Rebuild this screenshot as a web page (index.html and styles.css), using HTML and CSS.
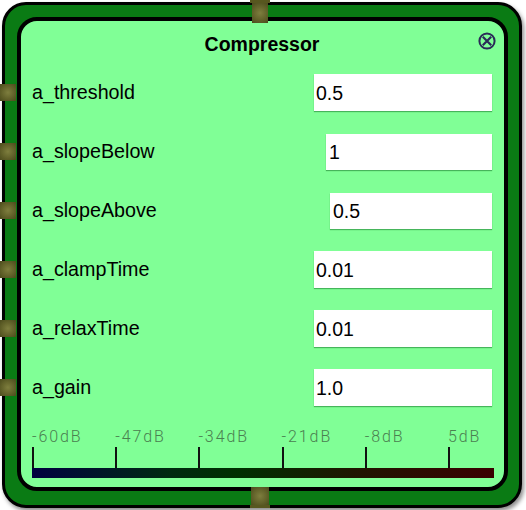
FILE: index.html
```html
<!DOCTYPE html>
<html>
<head>
<meta charset="utf-8">
<link rel="stylesheet" href="styles.css">
</head>
<body>
<div class="node">
  <div class="port port-top"></div>
  <div class="port port-bottom"></div>
  <div class="panel">
    <div class="header">
      <span class="title">Compressor</span>
      <svg class="close" width="18" height="18" viewBox="0 0 18 18">
        <circle cx="9" cy="9" r="7.6" fill="none" stroke="#2a2a58" stroke-width="2"/>
        <path d="M4.8 4.8 L13.2 13.2 M13.2 4.8 L4.8 13.2" stroke="#2a2a58" stroke-width="2.2"/>
      </svg>
    </div>
    <div class="rows">
      <div class="row"><span class="port port-left"></span><span class="label">a_threshold</span><input class="field" value="0.5"></div>
      <div class="row"><span class="port port-left"></span><span class="label">a_slopeBelow</span><input class="field field-mid" value="1"></div>
      <div class="row"><span class="port port-left"></span><span class="label">a_slopeAbove</span><input class="field field-short" value="0.5"></div>
      <div class="row"><span class="port port-left"></span><span class="label">a_clampTime</span><input class="field" value="0.01"></div>
      <div class="row"><span class="port port-left"></span><span class="label">a_relaxTime</span><input class="field" value="0.01"></div>
      <div class="row"><span class="port port-left"></span><span class="label">a_gain</span><input class="field" value="1.0"></div>
    </div>
    <div class="meter">
      <div class="ticks">
        <div class="tick"><span class="db">-60dB</span></div>
        <div class="tick"><span class="db">-47dB</span></div>
        <div class="tick"><span class="db">-34dB</span></div>
        <div class="tick"><span class="db">-21dB</span></div>
        <div class="tick"><span class="db">-8dB</span></div>
        <div class="tick"><span class="db">5dB</span></div>
      </div>
      <div class="bar"></div>
    </div>
  </div>
</div>
</body>
</html>
```
FILE: styles.css
```css
html, body {
  margin: 0;
  padding: 0;
  background: #ffffff;
}
body {
  width: 526px;
  height: 510px;
  overflow: hidden;
  font-family: "Liberation Sans", Arial, sans-serif;
}
.node {
  position: relative;
  margin: 2px 0 0 2px;
  width: 520px;
  height: 506px;
  border: 3px solid #000;
  border-radius: 24px;
  background: #0a7b14;
  box-shadow: 2px 3px 4px rgba(0,0,0,0.45);
  padding: 12px 11px 14px 12px;
  box-sizing: border-box;
}
.panel {
  height: 100%;
  box-sizing: border-box;
  border: 4px solid #000;
  border-radius: 20px;
  background: #80ff96;
  padding: 0 12px 0 11px;
}
.header {
  position: relative;
  height: 42px;
  padding-top: 11px;
  box-sizing: border-box;
  text-align: center;
}
.title {
  font-weight: bold;
  font-size: 19.5px;
  line-height: 24px;
  color: #000;
}
.close {
  position: absolute;
  right: -4px;
  top: 11px;
}
.rows {
  display: flex;
  flex-direction: column;
}
.row {
  position: relative;
  height: 59px;
  display: flex;
  align-items: center;
  justify-content: space-between;
}
.label {
  font-size: 19.7px;
  color: #000;
}
.field {
  box-sizing: border-box;
  width: 178px;
  height: 37px;
  border: none;
  outline: none;
  background: #fff;
  box-shadow: 0 1px 1px rgba(0,90,20,0.45);
  padding: 2px 0 0 2px;
  font-family: "Liberation Sans", Arial, sans-serif;
  font-size: 19.5px;
  color: #000;
}
.field-mid {
  width: 166px;
  height: 36px;
  padding-left: 3px;
}
.field-short {
  width: 162px;
  height: 36px;
  padding-left: 3px;
}
.port {
  display: block;
  background: radial-gradient(circle at 50% 50%, #7e7e3e 0%, #62622a 55%, #4b4b1c 100%);
}
.port-left {
  position: absolute;
  left: -32px;
  top: 21px;
  width: 16px;
  height: 17px;
}
.port-top {
  position: absolute;
  left: 247px;
  top: -5px;
  width: 16px;
  height: 20px;
  border-top: 3px solid #5a5a26;
}
.port-top::before {
  content: "";
  position: absolute;
  left: -2px;
  top: -3px;
  width: 20px;
  height: 3px;
  background: #57571f;
}
.port-bottom {
  position: absolute;
  left: 246px;
  top: 482px;
  width: 18px;
  height: 18px;
}
.port-bottom::after {
  content: "";
  position: absolute;
  left: -1px;
  bottom: -3px;
  width: 20px;
  height: 3px;
  background: #57571f;
}
.meter {
  margin-top: 11px;
}
.ticks {
  display: flex;
}
.tick {
  width: 83.2px;
  height: 40px;
  flex: none;
  position: relative;
  display: flex;
  flex-direction: column;
}
.tick::after {
  content: "";
  position: absolute;
  left: 0;
  top: 19px;
  width: 2px;
  height: 21px;
  background: #111;
}
.db {
  font-family: Roboto, "DejaVu Sans", sans-serif;
  font-weight: 300;
  font-size: 16px;
  letter-spacing: 1.9px;
  line-height: 18px;
  color: #4a8050;
  white-space: nowrap;
}
.bar {
  width: 462px;
  height: 10px;
  background: linear-gradient(to right, #000040 0%, #002a10 30%, #003000 45%, #201500 70%, #3a0000 100%);
}
```
